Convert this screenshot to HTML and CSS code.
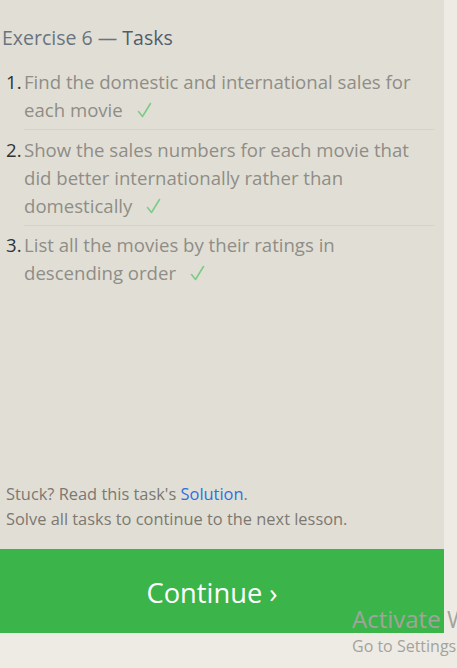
FILE: index.html
```html
<!DOCTYPE html>
<html>
<head>
<meta charset="utf-8">
<link rel="stylesheet" href="styles.css">
</head>
<body>
<div class="page">
  <section class="panel">
    <h2 class="title">Exercise 6 — <span class="title-strong">Tasks</span></h2>
    <ol class="tasks">
      <li class="task"><span class="num">1.</span><span class="text">Find the domestic and international sales for each movie<svg class="check" viewBox="0 0 15 16" width="15" height="16"><path d="M1.5 9.5 L5.5 14.5 L13.5 1.5" fill="none" stroke="#7ccb88" stroke-width="1.6" stroke-linecap="round" stroke-linejoin="round"/></svg></span></li>
      <li class="task"><span class="num">2.</span><span class="text">Show the sales numbers for each movie that did better internationally rather than domestically<svg class="check" viewBox="0 0 15 16" width="15" height="16"><path d="M1.5 9.5 L5.5 14.5 L13.5 1.5" fill="none" stroke="#7ccb88" stroke-width="1.6" stroke-linecap="round" stroke-linejoin="round"/></svg></span></li>
      <li class="task"><span class="num">3.</span><span class="text">List all the movies by their ratings in descending order<svg class="check" viewBox="0 0 15 16" width="15" height="16"><path d="M1.5 9.5 L5.5 14.5 L13.5 1.5" fill="none" stroke="#7ccb88" stroke-width="1.6" stroke-linecap="round" stroke-linejoin="round"/></svg></span></li>
    </ol>
    <div class="help">
      <p class="help-line">Stuck? Read this task's <a class="link">Solution</a>.</p>
      <p class="help-line">Solve all tasks to continue to the next lesson.</p>
    </div>
  </section>
  <div class="continue">Continue ›</div>
</div>
<div class="watermark">
  <div class="wm-big">Activate Windows</div>
  <div class="wm-small">Go to Settings to activate Windows.</div>
</div>
</body>
</html>
```

FILE: styles.css
```css
html, body {
  margin: 0;
  padding: 0;
}
body {
  background: #eeebe4;
  font-family: "Open Sans", "Noto Sans", sans-serif;
  width: 457px;
  height: 668px;
  overflow: hidden;
  position: relative;
}
.page {
  width: 444px;
}
.panel {
  background: #e1dfd5;
  height: 549px;
  box-sizing: border-box;
  display: flex;
  flex-direction: column;
  padding: 25px 10px 18px 2px;
}
.title {
  margin: 0;
  font-size: 19.5px;
  font-weight: 400;
  color: #6a7480;
  line-height: 26px;
}
.title-strong {
  color: #515c6a;
}
.tasks {
  list-style: none;
  margin: 17px 0 0 0;
  padding: 0;
}
.task {
  display: flex;
  font-size: 18.6px;
  line-height: 28px;
  color: #8f8d87;
  padding: 0 0 5px 0;
  margin-bottom: 5px;
  border-bottom: 1px solid #d5d3c9;
  margin-left: 22px;
}
.task:first-child {
  margin-bottom: 6px;
}
.task:last-child {
  border-bottom: none;
}
.num {
  color: #2e3338;
  width: 22px;
  margin-left: -18px;
  flex: none;
}
.text {
  flex: 1;
  margin-left: -4px;
}
.check {
  margin-left: 14px;
  vertical-align: -1px;
}
.help {
  margin-top: auto;
  padding-left: 4px;
}
.help-line {
  margin: 0;
  font-size: 16.4px;
  line-height: 25px;
  color: #7c7872;
}
.link {
  color: #2c6fe3;
}
.continue {
  height: 84px;
  background: #3bb54a;
  color: #ffffff;
  font-size: 27.3px;
  display: flex;
  align-items: center;
  justify-content: center;
  padding: 2px 20px 0 0;
  box-sizing: border-box;
}
.watermark {
  position: absolute;
  left: 352px;
  top: 604px;
  white-space: nowrap;
  color: #a3a39d;
}
.wm-big {
  font-size: 24px;
  line-height: 30px;
}
.wm-small {
  font-size: 16px;
  line-height: 24px;
}
```
